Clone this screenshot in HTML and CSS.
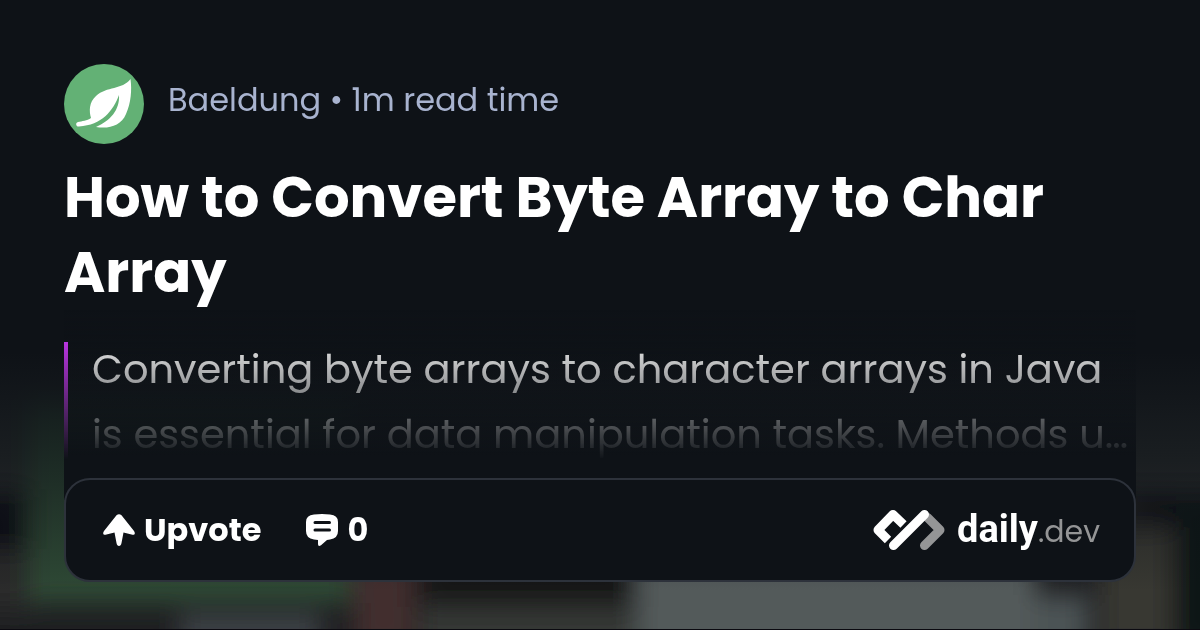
FILE: index.html
```html
<!DOCTYPE html>
<html lang="en">
<head>
<meta charset="utf-8">
<meta name="viewport" content="width=device-width, initial-scale=1">
<title>How to Convert Byte Array to Char Array</title>
<link rel="stylesheet" href="styles.css">
</head>
<body>
<svg class="backdrop" viewBox="0 0 1200 630" preserveAspectRatio="none" aria-hidden="true">
  <defs>
    <filter id="soft" x="-20%" y="-20%" width="140%" height="140%"><feGaussianBlur stdDeviation="12"/></filter>
    <linearGradient id="shade" x1="0" y1="0" x2="0" y2="1">
      <stop offset="0.56" stop-color="#0e1217"/>
      <stop offset="0.76" stop-color="#0e1217" stop-opacity="0.5"/>
      <stop offset="0.94" stop-color="#0e1217" stop-opacity="0"/>
    </linearGradient>
  </defs>
  <rect width="1200" height="630" fill="#1f2022"/>
  <g filter="url(#soft)">
    <rect x="-40" y="340" width="1280" height="150" fill="#2b2d2f"/>
    <rect x="-40" y="495" width="64" height="55" fill="#0c0e12"/>
    <rect x="-40" y="550" width="75" height="60" fill="#29292b"/>
    <rect x="30" y="400" width="320" height="204" fill="#2d4936"/>
    <rect x="180" y="616" width="140" height="60" fill="#3c4246"/>
    <rect x="354" y="560" width="60" height="90" fill="#432f2d"/>
    <rect x="422" y="540" width="212" height="64" fill="#151619"/>
    <rect x="420" y="608" width="214" height="60" fill="#353836"/>
    <rect x="636" y="540" width="400" height="120" fill="#535a5a"/>
    <rect x="1034" y="596" width="54" height="70" fill="#4b5255"/>
    <rect x="1130" y="495" width="110" height="30" fill="#0f1114"/>
    <rect x="1100" y="528" width="72" height="120" fill="#383731"/>
    <rect x="1176" y="500" width="60" height="150" fill="#111316"/>
  </g>
  <rect width="1200" height="630" fill="url(#shade)"/>
</svg>
<main class="card">
  <header class="source">
    <svg class="avatar" viewBox="0 0 80 80" role="img" aria-label="Baeldung logo">
      <circle cx="40" cy="40" r="40" fill="#63b175"/>
      <path d="M66.500 15C58 26 43 22 32 32C25 38 25 47 27 54C23 57 18 57 14 58C11 59 12 63 15 62.500C38 61 49 47 55 31C56 46 46 57 32 63C45 65 57 62 62 50C67 39 68 26 66.500 15Z" fill="#fff"/>
    </svg>
    <p class="meta">Baeldung • 1m read time</p>
  </header>
  <h1 class="title">How to Convert Byte Array to Char Array</h1>
  <div class="lower">
    <blockquote class="summary">Converting byte arrays to character arrays in Java is essential for data manipulation tasks. Methods u…</blockquote>
    <footer class="bar">
      <button class="action" type="button">
        <svg class="icon" viewBox="0 0 32 32" aria-hidden="true"><path d="M13.500 1.300Q16-1 18.500 1.300L31 17C33 20 31 21.500 28.500 20.500L20.500 18.500L18.500 29C18 33 14 33 13.500 29L11.500 18.500L3.500 20.500C1 21.500-1 20 1 17Z" fill="#fff"/></svg>
        <span>Upvote</span>
      </button>
      <button class="action" type="button" aria-label="Comments: 0">
        <svg class="icon" viewBox="0 0 32 32" aria-hidden="true"><path d="M8 .6Q16-.6 24 .6Q32 1.300 32 8V17Q32 24.500 24 25.500L21 26L15 31.300Q12 33 12 30V26L8 25.500Q0 24.500 0 17V8Q0 1.300 8 .6Z" fill="#fff"/><path d="M9 8.500H23.500M9 16H23.500" stroke="#0e1217" stroke-width="3" stroke-linecap="round"/></svg>
        <span>0</span>
      </button>
      <a class="brand" href="#">
        <svg class="mark" viewBox="0 0 72 40" aria-hidden="true">
          <path d="M51.500 35.500L67 20L54.500 7.500" fill="none" stroke="#949596" stroke-width="9" stroke-linejoin="round" stroke-linecap="round"/>
          <path d="M30.500 14.500L20 4.500L5 20L15 30" fill="none" stroke="#fff" stroke-width="9" stroke-linejoin="round"/>
          <path d="M14.500 34.500L49.500 -.5" stroke="#0e1217" stroke-width="1.500"/>
          <path d="M20.500 35.500L51.500 4.500" stroke="#fff" stroke-width="9" stroke-linecap="round"/>
        </svg>
        <span class="wordmark"><span class="daily">daily</span><span class="dev">.dev</span></span>
      </a>
    </footer>
  </div>
</main>
</body>
</html>
```
FILE: styles.css
```css
* {
  box-sizing: border-box;
}

body {
  margin: 0;
  background: #0e1217;
  color: #fff;
  font-family: Poppins, Inter, "Liberation Sans", sans-serif;
}

.backdrop {
  position: fixed;
  inset: 0;
  z-index: -1;
  width: 100%;
  height: 100%;
  border-bottom: 1px solid #0b0a10;
}

.card {
  display: flex;
  flex-direction: column;
  min-height: 100vh;
  padding: 64px 64px 48px;
}

.source {
  display: flex;
  align-items: center;
  gap: 24px;
}

.avatar {
  width: 80px;
  height: 80px;
}

.meta {
  margin: 0 0 8px;
  color: #a8b3cf;
  font-size: 32px;
  line-height: 48px;
}

.title {
  margin: 16px 0 0;
  font-size: 56px;
  font-weight: 700;
  line-height: 75px;
}

.lower {
  padding-top: 27px;
  background: linear-gradient(transparent, #0e1217 146px) no-repeat 0 0 / 100% 190px;
}

.summary {
  margin: 0 0 11px;
  padding-left: 28px;
  background: linear-gradient(#b936e0, #b936e0) no-repeat 0 5px / 4px 118px;
  color: #e8e8e8;
  font-size: 40px;
  line-height: 65px;
  mask-image: linear-gradient(#000 5px, transparent 123px);
}

.bar {
  display: flex;
  align-items: center;
  gap: 45px;
  min-height: 104px;
  padding: 0 34px 0 37px;
  border: 2px solid #2d323b;
  border-radius: 26px;
  background: #0e1217;
}

.action {
  display: flex;
  align-items: center;
  gap: 9px;
  padding: 0;
  border: 0;
  background: none;
  color: inherit;
  font: inherit;
  font-size: 32px;
  font-weight: 700;
  line-height: 40px;
}

.icon {
  width: 32px;
  height: 32px;
}

.brand {
  display: flex;
  align-items: center;
  gap: 12px;
  margin-left: auto;
  color: inherit;
  text-decoration: none;
}

.mark {
  width: 72px;
  height: 40px;
}

.wordmark {
  display: flex;
  align-items: baseline;
  line-height: 40px;
}

.daily {
  font-family: Roboto, sans-serif;
  font-size: 38px;
  font-weight: 700;
}

.dev {
  color: #949596;
  font-size: 30px;
  font-weight: 400;
}
```
